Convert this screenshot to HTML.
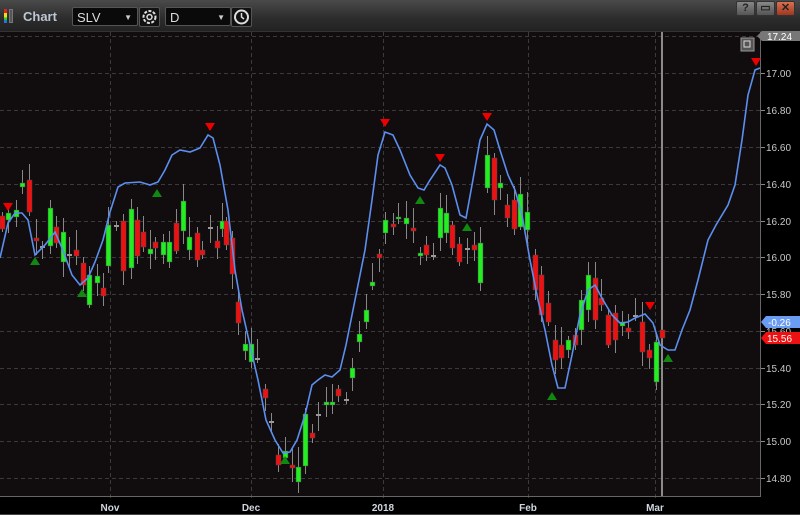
<!DOCTYPE html>
<html><head><meta charset="utf-8"><style>
html,body{margin:0;padding:0;background:#000;width:800px;height:515px;overflow:hidden;font-family:"Liberation Sans",sans-serif}
#top{position:absolute;left:0;top:0;width:800px;height:31px;background:linear-gradient(#4a4a4a,#2c2c2c 60%,#222);}
.box{position:absolute;top:7px;height:19px;background:#0a0a0a;border:1px solid #555;border-radius:2px;color:#ddd;font-size:13px;line-height:19px;box-sizing:border-box;padding-left:4px}
.btn{position:absolute;top:7px;width:21px;height:20px;background:#111;border:1px solid #555;border-radius:2px;box-sizing:border-box}
.wb{position:absolute;top:1px;height:15px;width:19px;background:linear-gradient(#888,#555);border:1px solid #333;border-radius:2px;box-sizing:border-box;color:#222;font-size:11px;text-align:center;line-height:13px;font-weight:bold}
</style></head><body>
<div id="top">
 <div style="position:absolute;left:4px;top:9px;width:3px;height:14px;background:linear-gradient(#d22 0,#d22 30%,#ed2 30%,#ed2 60%,#2c2 60%,#2c2 80%,#27d 80%)"></div>
 <div style="position:absolute;left:9px;top:9px;width:4px;height:14px;background:#555;border:1px solid #777;box-sizing:border-box"></div>
 <div style="position:absolute;left:23px;top:9px;color:#bcc6d4;font-size:13px;font-weight:bold">Chart</div>
 <div class="box" style="left:72px;width:66px">SLV<span style="position:absolute;right:5px;font-size:8px;color:#ccc">▼</span></div>
 <div class="btn" style="left:139px"><svg width="19" height="18"><circle cx="9.5" cy="9" r="6" fill="none" stroke="#ddd" stroke-width="2" stroke-dasharray="3 1.5"/><circle cx="9.5" cy="9" r="2.5" fill="none" stroke="#ddd" stroke-width="1.5"/></svg></div>
 <div class="box" style="left:165px;width:66px">D<span style="position:absolute;right:5px;font-size:8px;color:#ccc">▼</span></div>
 <div class="btn" style="left:231px"><svg width="19" height="18"><circle cx="9.5" cy="9" r="6.5" fill="none" stroke="#ddd" stroke-width="2"/><path d="M9.5 5v4l2.5 2" stroke="#ddd" stroke-width="1.5" fill="none"/></svg></div>
 <div class="wb" style="left:736px">?</div>
 <div class="wb" style="left:756px">▭</div>
 <div class="wb" style="left:776px;background:linear-gradient(#d87050,#a03820);color:#222">✕</div>
</div>
<svg id="c" width="800" height="515" style="position:absolute;left:0;top:0" xmlns="http://www.w3.org/2000/svg">
<rect x="0" y="31" width="760" height="465" fill="#110c0e"/>
<rect x="0" y="31" width="800" height="1" fill="#333"/>
<g id="grid"></g>
<line x1="662" y1="32" x2="662" y2="496" stroke="#8a8a8a" stroke-width="2"/>
<line x1="0" y1="496.5" x2="760" y2="496.5" stroke="#666"/>
<line x1="760.5" y1="32" x2="760.5" y2="497" stroke="#666"/>
<line x1="0" y1="514.5" x2="800" y2="514.5" stroke="#444"/>
<g id="cd"></g>
<polyline fill="none" stroke="#5b8ff0" stroke-width="1.6" points="0,258 8,223 15,213 22,213 28,220 35,255 45,245 55,232 62,248 72,275 80,285 88,278 95,262 103,240 110,212 118,187 125,183 140,182 150,185 158,182 165,170 172,155 180,150 190,152 200,148 208,135 213,138 220,165 228,210 235,270 242,310 250,345 258,380 266,420 275,440 283,453 290,452 297,440 305,415 312,385 318,380 325,375 332,377 340,370 346,345 355,300 365,250 372,200 378,155 385,132 393,135 400,150 410,175 418,188 424,190 430,180 440,165 445,168 452,185 460,215 466,218 472,185 480,140 487,124 494,130 500,150 508,175 515,190 522,215 530,260 538,300 545,330 552,365 558,388 565,388 572,355 580,315 588,290 595,285 603,300 612,315 620,323 628,322 635,318 645,314 653,323 660,345 668,350 675,350 682,330 690,310 698,280 708,240 716,225 728,205 735,185 742,140 748,95 755,70 760,68"/>
<g id="mk"></g>
<g id="lab" font-size="10" fill="#c8c8c8"></g>
<rect x="741" y="38" width="13" height="13" fill="#555" stroke="#999"/>
<rect x="744" y="41" width="6" height="6" fill="none" stroke="#ddd"/>
<path d="M767 36 l-5 0 l-5 5 l5 5 l38 0 l0 -10z" fill="#777" transform="translate(0,-5)"/>
<text x="767" y="40" font-size="10" fill="#fff">17.24</text>
<path d="M766 316 h34 v12 h-34 l-5 -6z" fill="#6a9cf4"/>
<text x="768" y="326" font-size="10" fill="#fff">-0.26</text>
<path d="M766 332 h34 v12 h-34 l-5 -6z" fill="#ee1111"/>
<text x="767" y="342" font-size="10" fill="#fff">15.56</text>
<g font-size="10" fill="#cfd6e0" font-weight="bold" text-anchor="middle">
<text x="110" y="511">Nov</text><text x="251" y="511">Dec</text><text x="383" y="511">2018</text><text x="528" y="511">Feb</text><text x="655" y="511">Mar</text></g>
</svg>
<script>
var NS="http://www.w3.org/2000/svg";
function el(p,t,a){var e=document.createElementNS(NS,t);for(var k in a)e.setAttribute(k,a[k]);document.getElementById(p).appendChild(e);return e;}
var levels=[["17.00",73],["16.80",110],["16.60",147],["16.40",184],["16.20",221],["16.00",257],["15.80",294],["15.60",331],["15.40",368],["15.20",404],["15.00",441],["14.80",478]];
el("grid","line",{x1:0,y1:36.5,x2:760,y2:36.5,stroke:"#3a3a3a","stroke-dasharray":"4 3"});
levels.forEach(function(l){el("grid","line",{x1:0,y1:l[1]+.5,x2:760,y2:l[1]+.5,stroke:"#3a3a3a","stroke-dasharray":"4 3"});
 el("grid","line",{x1:760,y1:l[1]+.5,x2:765,y2:l[1]+.5,stroke:"#888"});
 var t=el("lab","text",{x:766,y:l[1]+4});t.textContent=l[0];});
[110,251,383,528,655].forEach(function(x){el("grid","line",{x1:x+.5,y1:32,x2:x+.5,y2:500,stroke:"#3a3a3a","stroke-dasharray":"4 3"});});
var C=[[2,216,229,'r'],[8,213,220,'g'],[16,210,217,'g'],[22,183,187,'g'],[29,180,212,'r'],[36,238,241,'r'],[42,246,248,'n'],[50,208,246,'g'],[56,227,243,'r'],[63,232,262,'g'],[69,254,256,'n'],[76,250,256,'r'],[83,263,285,'r'],[89,275,305,'g'],[97,276,283,'g'],[103,288,296,'r'],[108,225,266,'g'],[116,225,227,'n'],[123,221,271,'r'],[131,209,268,'g'],[137,220,256,'r'],[143,232,247,'r'],[150,249,254,'g'],[155,242,248,'r'],[163,242,255,'g'],[169,242,262,'g'],[176,223,251,'r'],[183,201,231,'g'],[189,237,250,'g'],[197,233,260,'r'],[202,250,255,'r'],[210,227,229,'n'],[217,241,248,'r'],[222,221,229,'g'],[226,221,245,'r'],[232,238,274,'r'],[238,302,323,'r'],[245,344,351,'g'],[251,344,362,'g'],[257,358,360,'n'],[265,389,398,'r'],[271,421,423,'n'],[278,455,465,'r'],[285,451,458,'g'],[292,465,468,'r'],[298,467,482,'g'],[305,414,466,'g'],[312,433,438,'r'],[318,414,416,'n'],[326,402,405,'g'],[332,402,405,'g'],[338,389,396,'r'],[346,399,401,'n'],[352,368,378,'g'],[359,334,342,'g'],[366,310,322,'g'],[372,282,286,'g'],[379,254,258,'r'],[385,220,233,'g'],[393,224,227,'r'],[398,217,219,'g'],[406,218,224,'g'],[413,228,231,'r'],[420,253,256,'g'],[426,245,255,'r'],[433,255,257,'n'],[440,208,238,'g'],[446,213,233,'g'],[452,225,248,'r'],[459,244,262,'r'],[467,248,250,'n'],[474,245,250,'r'],[480,243,283,'g'],[487,155,188,'g'],[494,158,200,'r'],[500,183,188,'g'],[507,205,218,'r'],[514,200,229,'r'],[520,194,227,'g'],[527,212,230,'g'],[535,255,290,'r'],[541,275,315,'r'],[548,303,322,'r'],[555,340,360,'r'],[561,345,358,'r'],[568,340,350,'g'],[575,335,345,'r'],[581,300,330,'g'],[588,275,310,'g'],[595,278,320,'r'],[601,298,305,'r'],[608,315,345,'r'],[615,313,340,'r'],[622,322,326,'g'],[628,328,332,'r'],[635,315,317,'n'],[642,322,352,'r'],[649,350,358,'r'],[656,342,382,'g'],[662,330,338,'r']];
C.forEach(function(c,i){var h=(i*37)%17+4;
 el("cd","line",{x1:c[0]+.5,y1:c[1]-h,x2:c[0]+.5,y2:c[2]+((i*23)%13+3),stroke:"#888"});
 var col=c[3]=='r'?"#ee1111":c[3]=='g'?"#22ee22":"#999";
 el("cd","rect",{x:c[0]-2,y:c[1],width:c[3]=='n'?5:5,height:Math.max(c[2]-c[1],2),fill:col,stroke:c[3]=='n'?"none":"#444","stroke-width":.5});});
[[8,207],[210,127],[385,123],[440,158],[487,117],[650,306],[756,62]].forEach(function(p){el("mk","path",{d:"M"+(p[0]-5)+" "+(p[1]-4)+"h10l-5 8z",fill:"#ee0000"});});
[[35,261],[82,293],[157,193],[285,460],[420,200],[467,227],[552,396],[668,358]].forEach(function(p){el("mk","path",{d:"M"+(p[0]-5)+" "+(p[1]+4)+"h10l-5 -8z",fill:"#118811"});});
</script>
</body></html>
